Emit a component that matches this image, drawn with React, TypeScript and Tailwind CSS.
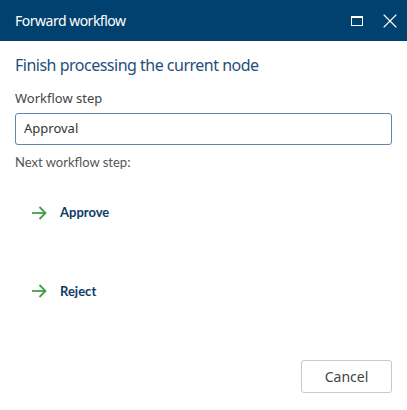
import { X } from "lucide-react";

function NextStep({ label }: { label: string }) {
  return (
    <button className="flex items-center gap-[13px] pl-[16px] text-left">
      <svg width="16" height="14" viewBox="0 0 16 14" fill="none" stroke="#43a047" strokeWidth="1.8">
        <path d="M1 7h13.5" />
        <path d="M8.5 1l6 6-6 6" />
      </svg>
      <span className="font-['Lato',sans-serif] text-[13px] font-bold text-[#0d3b66]">{label}</span>
    </button>
  );
}

export default function App() {
  return (
    <div className="flex h-[410px] w-[407px] flex-col bg-white font-['Noto_Sans',sans-serif]">
      <div className="flex h-[41px] items-center justify-between bg-[#01416f] pl-[15px] pr-[5px] text-white">
        <span className="text-[14px] tracking-[-0.5px]">Forward workflow</span>
        <div className="flex items-center gap-[15px]">
          <div className="h-[10px] w-[12px] border border-t-2 border-white" />
          <X className="size-[24px]" strokeWidth={1.1} />
        </div>
      </div>

      <div className="flex flex-1 flex-col px-[15px]">
        <h1 className="mt-[12px] text-[16px] tracking-[-0.5px] text-[#1f4f7c]">Finish processing the current node</h1>
        <label className="mt-[12px] text-[13px] text-[#444]">Workflow step</label>
        <div className="mt-[4px] flex h-[32px] items-center rounded-[3px] border border-[#5f86b0] px-[8px] text-[13px] text-[#333]">
          Approval
        </div>
        <div className="mt-[8px] font-['Lato',sans-serif] text-[13px] text-[#555]">Next workflow step:</div>

        <div className="mt-[31px] flex flex-col gap-[59px]">
          <NextStep label="Approve" />
          <NextStep label="Reject" />
        </div>

        <div className="mt-auto mb-[17px] flex justify-end">
          <button className="h-[33px] w-[91px] rounded-[3px] border border-[#c8c8c8] text-[14px] text-[#444]">
            Cancel
          </button>
        </div>
      </div>
    </div>
  );
}
